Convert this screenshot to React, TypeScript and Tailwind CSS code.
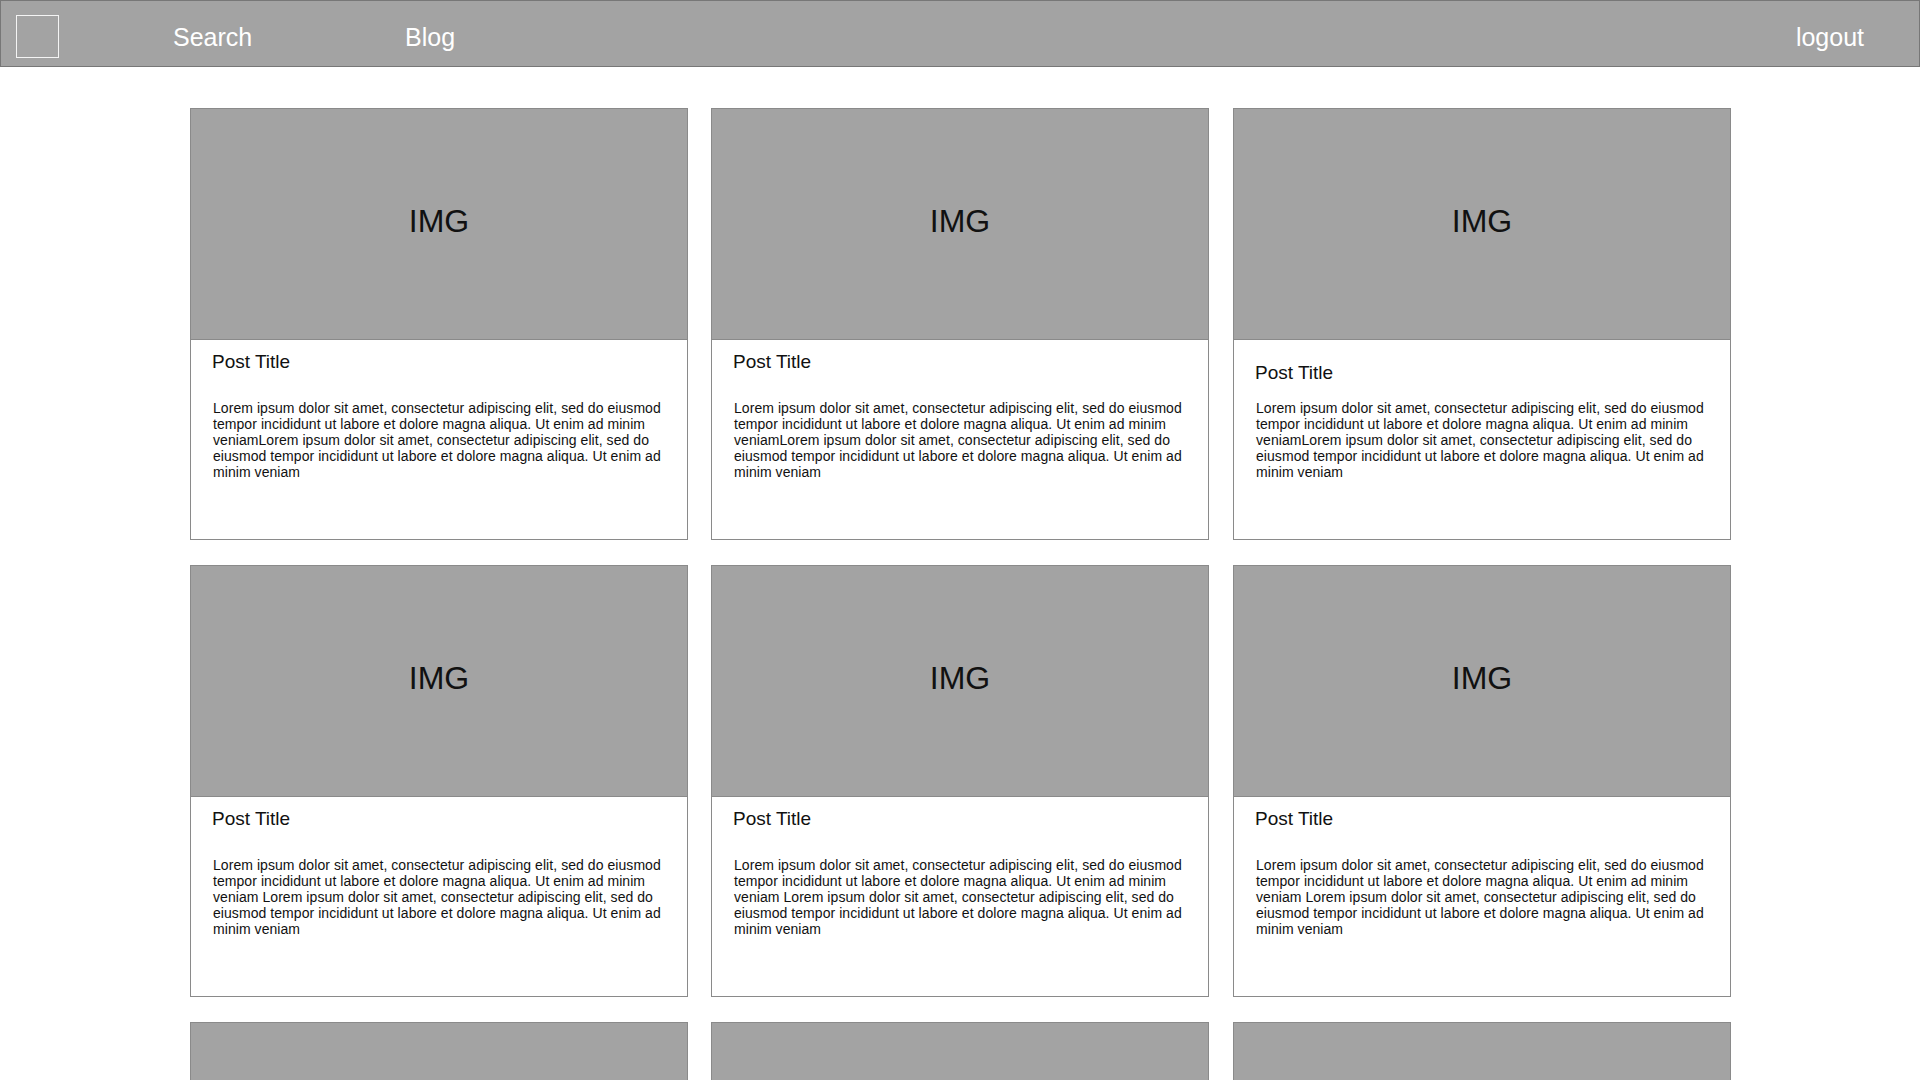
import React from "react";

const textA =
  "Lorem ipsum dolor sit amet, consectetur adipiscing elit, sed do eiusmod tempor incididunt ut labore et dolore magna aliqua. Ut enim ad minim veniamLorem ipsum dolor sit amet, consectetur adipiscing elit, sed do eiusmod tempor incididunt ut labore et dolore magna aliqua. Ut enim ad minim veniam";
const textB =
  "Lorem ipsum dolor sit amet, consectetur adipiscing elit, sed do eiusmod tempor incididunt ut labore et dolore magna aliqua. Ut enim ad minim veniam Lorem ipsum dolor sit amet, consectetur adipiscing elit, sed do eiusmod tempor incididunt ut labore et dolore magna aliqua. Ut enim ad minim veniam";

type Post = { text: string; shifted?: boolean };

const posts: Post[] = [
  { text: textA },
  { text: textA },
  { text: textA, shifted: true },
  { text: textB },
  { text: textB },
  { text: textB },
];

function Card({ post }: { post: Post }) {
  return (
    <div className="flex h-[432px] w-[498px] flex-col border border-[#8a8a8a] bg-white">
      <div className="flex h-[231px] shrink-0 items-center justify-center border-b border-[#8a8a8a] bg-[#a3a3a3] pb-[6px]">
        <span className="text-[32px] leading-[36px] text-[#111]">IMG</span>
      </div>
      <div className="flex flex-col pl-[21px] pr-[10px]">
        {post.shifted ? (
          <div className="pt-[21px] text-[19px] leading-[24px] text-[#111]">Post Title</div>
        ) : (
          <div className="pt-[10px] text-[19px] leading-[24px] text-[#111]">Post Title</div>
        )}
        {post.shifted ? (
          <p className="mt-[15px] pl-px text-[14px] leading-[16px] tracking-[0.06px] text-[#111]">{post.text}</p>
        ) : (
          <p className="mt-[26px] pl-px text-[14px] leading-[16px] tracking-[0.06px] text-[#111]">{post.text}</p>
        )}
      </div>
    </div>
  );
}

function PartialCard() {
  return <div className="h-[432px] w-[498px] border border-[#8a8a8a] bg-[#a3a3a3]" />;
}

export default function App() {
  return (
    <div
      className="h-screen w-full overflow-hidden bg-white"
      style={{ fontFamily: '"Liberation Sans", Arial, Helvetica, sans-serif' }}
    >
      <header className="flex h-[67px] w-full items-start border border-[#777777] bg-[#a3a3a3] text-white">
        <div className="ml-[15px] mt-[14px] h-[43px] w-[43px] border border-[#f4f4f4]" />
        <div className="ml-[114px] w-[232px] pt-[22px] text-[25px] leading-[29px]">Search</div>
        <div className="pt-[22px] text-[25px] leading-[29px]">Blog</div>
        <div className="ml-auto mr-[55px] pt-[22px] text-[25px] leading-[29px]">logout</div>
      </header>
      <main className="ml-[190px] mt-[41px] grid w-[1542px] grid-cols-[521px_522px_498px] gap-y-[25px]">
        {posts.map((p, i) => (
          <Card key={i} post={p} />
        ))}
        <PartialCard />
        <PartialCard />
        <PartialCard />
      </main>
    </div>
  );
}
